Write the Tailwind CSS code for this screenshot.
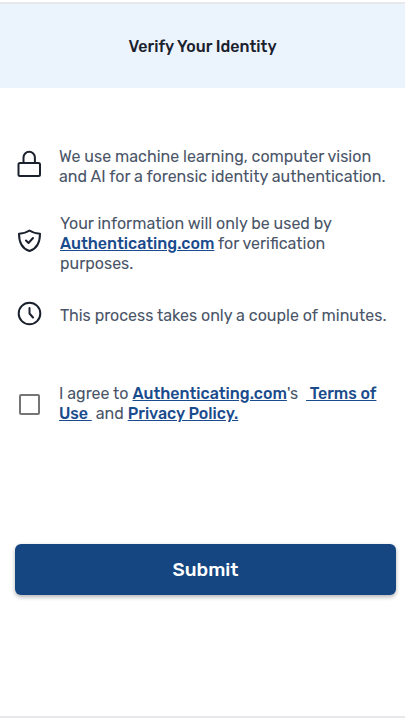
<!DOCTYPE html>
<html lang="en">
<head>
    <meta charset="UTF-8">
    <meta name="viewport" content="width=device-width, initial-scale=1.0">
    <title>Verify Your Identity</title>
    <script src="https://cdn.jsdelivr.net/npm/@tailwindcss/browser@4"></script>
</head>
<body class="bg-white pt-[2px] font-['Rubik','Roboto',sans-serif] text-[16px] leading-5 text-[#4a5568]">
    <div class="border-y-2 border-[#e7e8ec]">
        <!-- Header -->
        <header class="bg-[#ebf4fd] pt-[33px] pb-[31px] text-center">
            <h1 class="text-[16px] leading-5 font-medium text-[#1a202c]">Verify Your Identity</h1>
        </header>

        <form class="pt-[59px] pb-[121px]">
            <!-- Information -->
            <ul class="flex flex-col gap-[27px] pl-[17px] pr-2">
                <li class="flex items-center gap-[18px]">
                    <svg class="mb-1.5 size-6 shrink-0 overflow-visible text-[#1a202c]" viewBox="0 0 24 24" fill="none" stroke="currentColor" stroke-width="2" aria-hidden="true">
                        <rect x="1.500" y="11" width="21.500" height="13" rx="1.500"/>
                        <path d="M6.500 11V5.500a5.700 5.700 0 0 1 11.400 0V11"/>
                    </svg>
                    <p>We use machine learning, computer vision and AI for a forensic identity authentication.</p>
                </li>
                <li class="flex items-center gap-[19px]">
                    <svg class="mb-1.5 size-6 shrink-0 overflow-visible text-[#1a202c]" viewBox="0 0 24 24" fill="none" stroke="currentColor" stroke-width="2" stroke-linecap="round" stroke-linejoin="round" aria-hidden="true">
                        <path d="M12.500 1.500C10 3.300 6 4.500 2 4.700c0 9 2.700 14.800 10.500 17.300C20.300 19.500 23 13.700 23 4.700 19 4.500 15 3.300 12.500 1.500z"/>
                        <path d="M9 11.500l2.500 2.500 4.500-5"/>
                    </svg>
                    <p>Your information will only be used by <a href="#" class="font-medium text-[#1a4b8c] underline">Authenticating.com</a> for verification purposes.</p>
                </li>
                <li class="flex items-center gap-[19px]">
                    <svg class="mb-1.5 size-6 shrink-0 overflow-visible text-[#1a202c]" viewBox="0 0 24 24" fill="none" stroke="currentColor" stroke-width="2" stroke-linecap="round" stroke-linejoin="round" aria-hidden="true">
                        <circle cx="12.500" cy="12.500" r="10.800"/>
                        <path d="M12.500 7v5.500l3.500 4"/>
                    </svg>
                    <p>This process takes only a couple of minutes.</p>
                </li>
            </ul>

            <!-- Consent -->
            <div class="mt-[53px] flex items-center gap-[19px] pl-[19px] pr-2">
                <input id="agree" type="checkbox" class="size-[21px] shrink-0 appearance-none rounded-xs border-2 border-[#757575] checked:bg-[#154681]">
                <label for="agree">I agree to <a href="#" class="font-medium text-[#1a4b8c] underline">Authenticating.com</a>'s&nbsp; <a href="#" class="font-medium text-[#1a4b8c] underline">&nbsp;Terms of Use&nbsp;</a>&nbsp;and <a href="#" class="font-medium text-[#1a4b8c] underline">Privacy Policy.</a></label>
            </div>

            <div class="mt-30 pr-[9px] pl-[15px]">
                <button type="submit" class="h-[51px] w-full rounded-md bg-[#154681] text-[19px] font-medium text-white shadow-[0_2px_4px_rgba(0,0,0,0.3)]">Submit</button>
            </div>
        </form>
    </div>
</body>
</html>
